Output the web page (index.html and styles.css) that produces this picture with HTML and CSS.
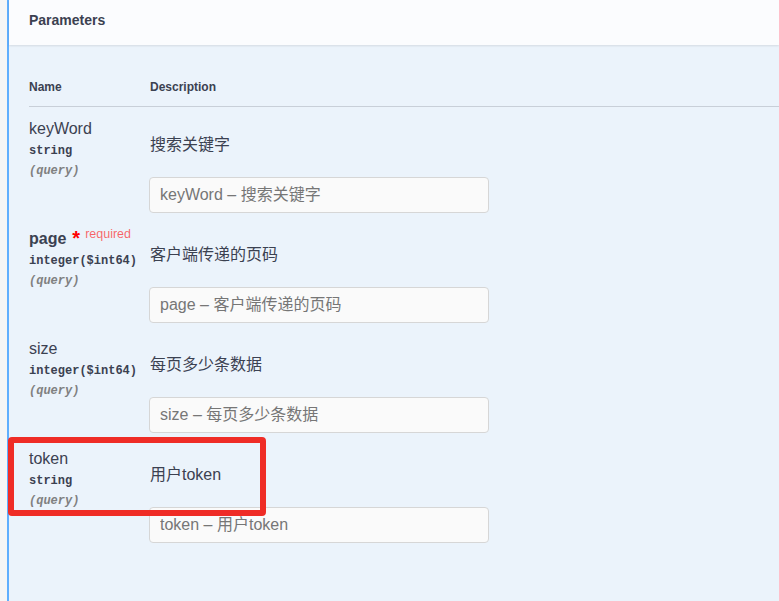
FILE: index.html
```html
<!DOCTYPE html>
<html lang="zh-CN">
<head>
    <meta charset="UTF-8">
    <meta name="viewport" content="width=device-width, initial-scale=1.0">
    <title>Parameters</title>
    <link rel="stylesheet" href="styles.css">
</head>
<body>
    <div class="opblock">
        <div class="section-header">
            <h4 class="opblock-title">Parameters</h4>
        </div>

        <div class="parameters">
            <div class="param-head">
                <div class="col-name">Name</div>
                <div class="col-desc">Description</div>
            </div>

            <div class="param-row">
                <div class="col-name">
                    <div class="parameter-name">keyWord</div>
                    <div class="parameter-type">string</div>
                    <div class="parameter-in">(query)</div>
                </div>
                <div class="col-desc">
                    <p class="markdown">搜索关键字</p>
                    <input type="text" placeholder="keyWord – 搜索关键字">
                </div>
            </div>

            <div class="param-row">
                <div class="col-name">
                    <div class="parameter-name required">page<span class="star">*</span><span class="req">required</span></div>
                    <div class="parameter-type">integer($int64)</div>
                    <div class="parameter-in">(query)</div>
                </div>
                <div class="col-desc">
                    <p class="markdown">客户端传递的页码</p>
                    <input type="text" placeholder="page – 客户端传递的页码">
                </div>
            </div>

            <div class="param-row">
                <div class="col-name">
                    <div class="parameter-name">size</div>
                    <div class="parameter-type">integer($int64)</div>
                    <div class="parameter-in">(query)</div>
                </div>
                <div class="col-desc">
                    <p class="markdown">每页多少条数据</p>
                    <input type="text" placeholder="size – 每页多少条数据">
                </div>
            </div>

            <div class="param-row highlighted">
                <!-- annotation box drawn over the row -->
                <div class="callout"></div>
                <div class="col-name">
                    <div class="parameter-name">token</div>
                    <div class="parameter-type">string</div>
                    <div class="parameter-in">(query)</div>
                </div>
                <div class="col-desc">
                    <p class="markdown">用户token</p>
                    <input type="text" placeholder="token – 用户token">
                </div>
            </div>
        </div>
    </div>
</body>
</html>
```

FILE: styles.css
```css
body {
    margin: 0;
    background: #f6f6f6;
    font-family: "Liberation Sans", "Noto Sans CJK SC", sans-serif;
    color: #3b4151;
    overflow: hidden;
}
.opblock {
    margin-left: 7px;
    border-left: 2px solid #61affe;
    background: #ebf3fb;
    min-height: 100vh;
}
.section-header {
    background: #fbfcfe;
    box-shadow: 0 1px 2px rgba(0, 0, 0, 0.1);
    padding: 12px 20px 16px;
}
.opblock-title {
    margin: 0;
    font-size: 14px;
    line-height: 17px;
    font-weight: bold;
}
.parameters {
    padding: 35px 0 0 20px;
}
.param-head,
.param-row {
    display: flex;
}
.param-head {
    font-size: 12px;
    line-height: 15px;
    font-weight: bold;
    padding-bottom: 11px;
    border-bottom: 1px solid rgba(59, 65, 81, 0.2);
}
.col-name {
    width: 121px;
    flex-shrink: 0;
}
.col-desc {
    flex: 1;
}
.param-row {
    position: relative;
    height: 110px;
    box-sizing: border-box;
    padding-top: 12px;
}
.parameter-name {
    font-size: 16px;
    line-height: 20px;
    white-space: nowrap;
}
.parameter-name.required {
    font-weight: bold;
}
.star {
    color: red;
    font-size: 20px;
    line-height: 0;
    margin-left: 6px;
    position: relative;
    top: 1px;
}
.req {
    font-size: 12.5px;
    line-height: 0;
    font-weight: normal;
    color: rgba(255, 0, 0, 0.6);
    padding-left: 5px;
    position: relative;
    top: -6px;
}
.parameter-type {
    font-family: "Liberation Mono", monospace;
    font-size: 12px;
    line-height: 15px;
    font-weight: bold;
    padding: 5px 0;
}
.parameter-in {
    font-family: "Liberation Mono", monospace;
    font-size: 12px;
    line-height: 15px;
    font-weight: bold;
    font-style: italic;
    color: #808080;
}
.markdown {
    margin: 16px 0 22px;
    font-size: 16px;
    line-height: 20px;
}
input {
    display: block;
    box-sizing: border-box;
    width: 340px;
    height: 36px;
    margin-left: -1px;
    padding: 8px 10px;
    border: 1px solid #d6d6d6;
    border-radius: 4px;
    background: #fafafa;
    font-family: "Liberation Sans", "Noto Sans CJK SC", sans-serif;
    font-size: 16px;
    color: #3b4151;
}
input::placeholder {
    color: #767676;
}
.callout {
    position: absolute;
    left: -21px;
    top: 0;
    width: 258px;
    height: 79px;
    box-sizing: border-box;
    border: 6px solid #ef2c26;
    border-radius: 4px;
}
```
